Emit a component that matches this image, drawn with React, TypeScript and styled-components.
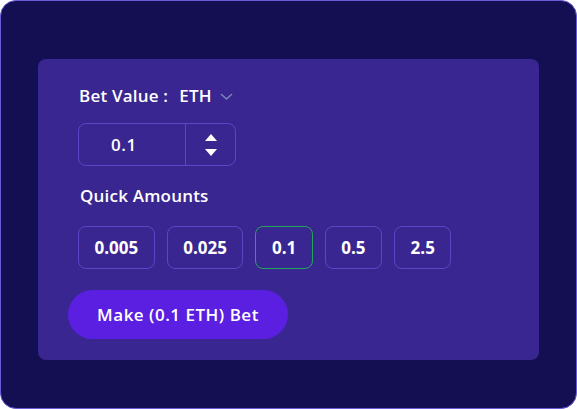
import styled, { createGlobalStyle } from "styled-components"

const GlobalStyle = createGlobalStyle`
  html, body {
    margin: 0;
    padding: 0;
    background: #ffffff;
  }
  body {
    font-family: "Open Sans", "Noto Sans", sans-serif;
  }
`

const Card = styled.div`
  box-sizing: border-box;
  width: 577px;
  height: 409px;
  padding: 58px 37px 48px;
  background: #130f52;
  border: 1px solid #6b5bd8;
  border-radius: 16px;
`

const Panel = styled.div`
  box-sizing: border-box;
  height: 100%;
  padding: 27px 40px 21px;
  background: #3a2690;
  border-radius: 8px;
  color: #ffffff;
`

const Label = styled.div<{ $mt?: number }>`
  display: flex;
  align-items: center;
  height: 20px;
  margin-top: ${(p) => p.$mt ?? 0}px;
  padding-left: ${(p) => (p.$mt ? 2 : 1)}px;
  font-size: 17px;
  font-weight: 600;
  line-height: 20px;
  letter-spacing: 0.2px;
`

const Currency = styled.span`
  margin-left: 11px;
`

const Chevron = styled.svg`
  margin-left: 8px;
  margin-top: 2px;
`

const Stepper = styled.div`
  display: flex;
  box-sizing: border-box;
  width: 158px;
  height: 43px;
  margin-top: 17px;
  border: 1px solid #5a47c8;
  border-radius: 8px;
`

const StepValue = styled.div`
  display: flex;
  align-items: center;
  box-sizing: border-box;
  width: 107px;
  padding-left: 32px;
  border-right: 1px solid #5a47c8;
  font-size: 17px;
  font-weight: 600;
  letter-spacing: 0.5px;
`

const StepArrows = styled.div`
  flex: 1;
  display: flex;
  flex-direction: column;
  align-items: center;
  justify-content: center;
  gap: 8px;
`

const Amounts = styled.div`
  display: flex;
  gap: 12px;
  margin-top: 20px;
`

const Amount = styled.button<{ $active?: boolean }>`
  box-sizing: border-box;
  height: 43px;
  padding: 0 15.5px;
  background: transparent;
  border: 1px solid ${(p) => (p.$active ? "#22a45c" : "#5a47c8")};
  border-radius: 8px;
  color: #ffffff;
  font-family: inherit;
  font-size: 17px;
  font-weight: 700;
`

const BetButton = styled.button`
  box-sizing: border-box;
  width: 220px;
  height: 49px;
  margin: 21px 0 0 -10px;
  background: #5a1fe0;
  border: none;
  border-radius: 25px;
  color: #ffffff;
  font-family: inherit;
  font-size: 17px;
  font-weight: 600;
  letter-spacing: 0.5px;
`

const quick = ["0.005", "0.025", "0.1", "0.5", "2.5"]

const App = () => {
  return (
    <>
      <GlobalStyle />
      <Card>
        <Panel>
          <Label>
            Bet Value :<Currency>ETH</Currency>
            <Chevron width="13" height="8" viewBox="0 0 13 8">
              <path d="M1.5 1.5 L6.5 6 L11.5 1.5" fill="none" stroke="#7d82b8" strokeWidth="1.6" strokeLinecap="round" />
            </Chevron>
          </Label>
          <Stepper>
            <StepValue>0.1</StepValue>
            <StepArrows>
              <svg width="12" height="7" viewBox="0 0 12 7">
                <path d="M6 0 L12 7 L0 7 Z" fill="#ffffff" />
              </svg>
              <svg width="12" height="7" viewBox="0 0 12 7">
                <path d="M0 0 L12 0 L6 7 Z" fill="#ffffff" />
              </svg>
            </StepArrows>
          </Stepper>
          <Label $mt={20}>Quick Amounts</Label>
          <Amounts>
            {quick.map((q) => (
              <Amount key={q} $active={q === "0.1"}>
                {q}
              </Amount>
            ))}
          </Amounts>
          <BetButton>Make (0.1 ETH) Bet</BetButton>
        </Panel>
      </Card>
    </>
  )
}

export default App
